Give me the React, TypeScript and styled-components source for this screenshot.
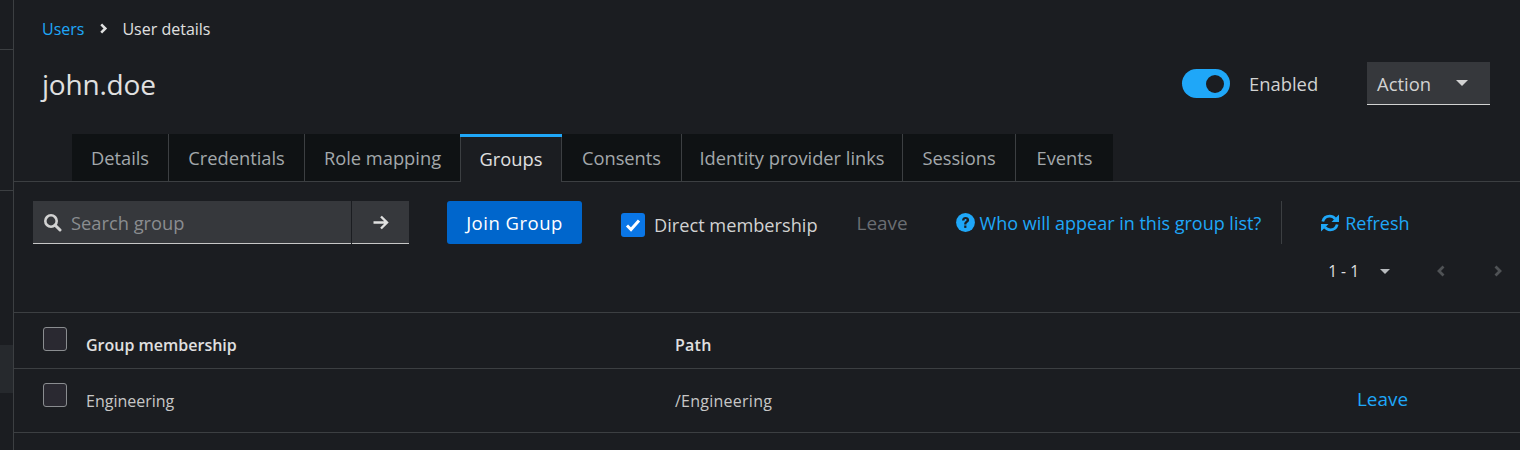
import { createGlobalStyle } from "styled-components";
import styled from "styled-components";

const Global = createGlobalStyle`
  html, body { margin: 0; padding: 0; background: #1b1d21; }
  body { font-family: "Open Sans", "Liberation Sans", sans-serif; color: #e0e0e0; }
`;

const blue = "#1fa7f8";

const Page = styled.div`
  width: 1520px;
  height: 450px;
  display: flex;
  overflow: hidden;
  background: #1b1d21;
`;

const Rail = styled.div`
  width: 13px;
  flex: none;
  border-right: 1px solid #3c3f42;
  display: flex;
  flex-direction: column;
`;
const RailItem = styled.div<{ $h: number; $active?: boolean; $line?: boolean }>`
  height: ${(p) => p.$h}px;
  box-sizing: border-box;
  background: ${(p) => (p.$active ? "#26292d" : "transparent")};
  border-bottom: ${(p) => (p.$line ? "1px solid #3c3f42" : "none")};
`;

const Main = styled.div`
  flex: 1;
  min-width: 0;
  display: flex;
  flex-direction: column;
`;

const Head = styled.div`
  padding: 18px 30px 0 28px;
  height: 134px;
  box-sizing: border-box;
`;
const Crumbs = styled.div`
  display: flex;
  align-items: center;
  height: 21px;
  font-size: 16px;
`;
const CrumbLink = styled.span`
  color: ${blue};
`;
const CrumbSep = styled.span`
  display: flex;
  margin: 0 13px 0 14px;
`;
const CrumbNow = styled.span`
  color: #e0e0e0;
`;
const TitleRow = styled.div`
  display: flex;
  align-items: center;
  margin-top: 23px;
  height: 43px;
`;
const Title = styled.h1`
  margin: 0;
  font-size: 28px;
  font-weight: 400;
  color: #e0e0e0;
  flex: 1;
  letter-spacing: -0.2px;
`;
const Toggle = styled.div`
  width: 48px;
  height: 29px;
  border-radius: 15px;
  background: ${blue};
  display: flex;
  align-items: center;
  justify-content: flex-end;
  padding-right: 6px;
  box-sizing: border-box;
`;
const Knob = styled.div`
  width: 18px;
  height: 18px;
  border-radius: 50%;
  background: #1b1d21;
`;
const ToggleLabel = styled.span`
  width: 70px;
  font-size: 18.4px;
  margin-left: 19px;
  margin-right: 48px;
  color: #d2d2d2;
  white-space: nowrap;
`;
const ActionBtn = styled.div`
  width: 123px;
  height: 43px;
  box-sizing: border-box;
  background: #36383c;
  border-bottom: 1px solid #d2d2d2;
  display: flex;
  align-items: center;
  justify-content: space-between;
  padding: 0 22px 0 10px;
  font-size: 18.4px;
  color: #d2d2d2;
`;
const Caret = styled.span<{ $w?: number; $c?: string }>`
  display: block;
  width: 0;
  height: 0;
  border-left: ${(p) => p.$w ?? 6}px solid transparent;
  border-right: ${(p) => p.$w ?? 6}px solid transparent;
  border-top: ${(p) => p.$w ?? 6}px solid ${(p) => p.$c ?? "#d2d2d2"};
`;

const TabBar = styled.div`
  display: flex;
  height: 48px;
  box-sizing: border-box;
  padding-left: 58px;
  border-bottom: 1px solid #3c3f42;
`;
const Tab = styled.div<{ $w: number; $active?: boolean }>`
  position: relative;
  width: ${(p) => p.$w}px;
  box-sizing: border-box;
  height: ${(p) => (p.$active ? "48px" : "47px")};
  display: flex;
  align-items: center;
  justify-content: center;
  font-size: 18.3px;
  background: ${(p) => (p.$active ? "#1b1d21" : "#0f1214")};
  color: ${(p) => (p.$active ? "#e0e0e0" : "#a3a8ab")};
  border-right: 1px solid #3c3f42;
  &:last-child { border-right: none; }
  ${(p) =>
    p.$active
      ? `&::before { content: ""; position: absolute; top: 0; left: -1px; right: -1px; height: 3px; background: ${blue}; }`
      : ""}
`;

const Toolbar = styled.div`
  display: flex;
  align-items: flex-start;
  padding: 19px 0 0 19px;
  height: 69px;
  box-sizing: border-box;
`;
const SearchBox = styled.div`
  width: 318px;
  height: 43px;
  box-sizing: border-box;
  background: #36383c;
  border-bottom: 1px solid #c7c7c7;
  display: flex;
  align-items: center;
  padding-left: 10px;
  gap: 9px;
`;
const SearchText = styled.span`
  font-size: 18.3px;
  color: #8a8d90;
`;
const SearchBtn = styled.div`
  width: 57px;
  height: 43px;
  margin-left: 1px;
  box-sizing: border-box;
  background: #36383c;
  border-bottom: 1px solid #c7c7c7;
  display: flex;
  align-items: center;
  justify-content: center;
`;
const JoinBtn = styled.div`
  width: 135px;
  height: 43px;
  margin-left: 38px;
  border-radius: 3px;
  background: #0066cc;
  color: #fff;
  font-size: 18.5px;
  letter-spacing: 0.5px;
  display: flex;
  align-items: center;
  justify-content: center;
`;
const CheckWrap = styled.div`
  display: flex;
  align-items: center;
  height: 48px;
  margin-left: 39px;
  gap: 9px;
  font-size: 18.2px;
  color: #d2d2d2;
`;
const BlueCheck = styled.div`
  width: 24px;
  height: 24px;
  border-radius: 3px;
  background: #0a76e6;
  display: flex;
  align-items: center;
  justify-content: center;
`;
const ToolText = styled.div<{ $ml: number; $muted?: boolean; $wide?: boolean }>`
  height: 43px;
  margin-left: ${(p) => p.$ml}px;
  display: flex;
  align-items: center;
  gap: 5px;
  font-size: ${(p) => (p.$wide ? "18.9px" : "18px")};
  color: ${(p) => (p.$muted ? "#6a6e73" : blue)};
`;
const Divider = styled.div`
  width: 1px;
  height: 43px;
  margin-left: 20px;
  background: #3c3f42;
`;

const Pager = styled.div`
  display: flex;
  align-items: center;
  height: 40px;
  padding-right: 16px;
  justify-content: flex-end;
  font-size: 15.5px;
  color: #e0e0e0;
`;
const PageCount = styled.span`
  margin-right: 21px;
`;
const PagerGap = styled.span`
  display: flex;
  margin-left: 45px;
`;

const Table = styled.div`
  margin-top: 21px;
  border-top: 1px solid #3c3f42;
`;
const Row = styled.div<{ $h: number }>`
  display: flex;
  height: ${(p) => p.$h}px;
  box-sizing: border-box;
  border-bottom: 1px solid #3c3f42;
  padding-left: 29px;
  padding-top: 14px;
`;
const Box = styled.div`
  width: 24px;
  height: 24px;
  box-sizing: border-box;
  flex: none;
  border-radius: 3px;
  border: 1px solid #8a8d90;
  background: #2a2931;
`;
const NameCell = styled.div<{ $bold?: boolean }>`
  width: 589px;
  margin-left: 19px;
  padding-top: 7px;
  font-size: 16px;
  font-weight: ${(p) => (p.$bold ? 600 : 400)};
  color: ${(p) => (p.$bold ? "#e0e0e0" : "#c7c7c7")};
`;
const PathCell = styled(NameCell)`
  width: 682px;
  margin-left: 0;
  letter-spacing: 0.25px;
`;
const RowLeave = styled.div`
  font-size: 18.9px;
  color: ${blue};
  padding-top: 3px;
`;

const Chevron = ({ dir, color, size = 12 }: { dir: "left" | "right"; color: string; size?: number }) => (
  <svg width={size} height={size} viewBox="0 0 12 12" fill="none">
    <path
      d={dir === "right" ? "M3.5 1.5 8 6 3.5 10.5" : "M8.5 1.5 4 6 8.5 10.5"}
      stroke={color}
      strokeWidth="2.8"
    />
  </svg>
);

const tabs = [
  { label: "Details", w: 97 },
  { label: "Credentials", w: 136 },
  { label: "Role mapping", w: 156 },
  { label: "Groups", w: 101, active: true },
  { label: "Consents", w: 120 },
  { label: "Identity provider links", w: 221 },
  { label: "Sessions", w: 113 },
  { label: "Events", w: 97 },
];

export default function App() {
  return (
    <>
      <Global />
      <Page>
        <Rail>
          <RailItem $h={50} $line />
          <RailItem $h={141} $line />
          <RailItem $h={154} />
          <RailItem $h={48} $active />
        </Rail>
        <Main>
          <Head>
            <Crumbs>
              <CrumbLink>Users</CrumbLink>
              <CrumbSep>
                <Chevron dir="right" color="#e0e0e0" size={11} />
              </CrumbSep>
              <CrumbNow>User details</CrumbNow>
            </Crumbs>
            <TitleRow>
              <Title>john.doe</Title>
              <Toggle>
                <Knob />
              </Toggle>
              <ToggleLabel>Enabled</ToggleLabel>
              <ActionBtn>
                Action
                <Caret />
              </ActionBtn>
            </TitleRow>
          </Head>
          <TabBar>
            {tabs.map((t) => (
              <Tab key={t.label} $w={t.w} $active={t.active}>
                {t.label}
              </Tab>
            ))}
          </TabBar>
          <Toolbar>
            <SearchBox>
              <svg width="19" height="19" viewBox="0 0 19 19" fill="none">
                <circle cx="8" cy="8" r="5.7" stroke="#d2d2d2" strokeWidth="2.6" />
                <path d="M12.2 12.2 17 17" stroke="#d2d2d2" strokeWidth="3" strokeLinecap="round" />
              </svg>
              <SearchText>Search group</SearchText>
            </SearchBox>
            <SearchBtn>
              <svg width="17" height="17" viewBox="0 0 17 17" fill="none">
                <path d="M1.5 8.5H14M9 2.5l6 6-6 6" stroke="#e0e0e0" strokeWidth="2.4" />
              </svg>
            </SearchBtn>
            <JoinBtn>Join Group</JoinBtn>
            <CheckWrap>
              <BlueCheck>
                <svg width="16" height="14" viewBox="0 0 16 14" fill="none">
                  <path d="M2 7.5l4 4 8-9" stroke="#fff" strokeWidth="3" />
                </svg>
              </BlueCheck>
              Direct membership
            </CheckWrap>
            <ToolText $ml={39} $muted $wide>
              Leave
            </ToolText>
            <ToolText $ml={48}>
              <svg width="19" height="19" viewBox="0 0 19 19">
                <circle cx="9.5" cy="9.5" r="9.4" fill={blue} />
                <path d="M6 7.4c.1-2.3 1.7-3.4 3.6-3.4 2 0 3.5 1.2 3.5 3 0 2.5-2.7 2.5-2.7 4.4H8.2c0-3 2.4-3.1 2.4-4.3 0-.6-.4-1-1-1-.7 0-1.1.5-1.2 1.3z" fill="#1b1d21" />
                <rect x="8.2" y="12.5" width="2.2" height="2.4" fill="#1b1d21" />
              </svg>
              Who will appear in this group list?
            </ToolText>
            <Divider />
            <ToolText $ml={38}>
              <svg width="20" height="20" viewBox="0 0 20 20" fill="none">
                <path d="M2.8 8.5C3.8 4.8 6.6 3.2 9.8 3.2c2.3 0 4.1 1 5.4 2.6" stroke={blue} strokeWidth="2.8" />
                <path d="M17.2 11.5c-1 3.7-3.8 5.3-7 5.3-2.3 0-4.1-1-5.4-2.6" stroke={blue} strokeWidth="2.8" />
                <path d="M19 1.5v7.5h-7.5zM1 18.5V11h7.5z" fill={blue} />
              </svg>
              Refresh
            </ToolText>
          </Toolbar>
          <Pager>
            <PageCount>1 - 1</PageCount>
            <Caret $w={5.5} $c="#b8bbbe" />
            <PagerGap>
              <Chevron dir="left" color="#4f5255" />
            </PagerGap>
            <PagerGap>
              <Chevron dir="right" color="#4f5255" />
            </PagerGap>
          </Pager>
          <Table>
            <Row $h={56}>
              <Box />
              <NameCell $bold>Group membership</NameCell>
              <PathCell $bold>Path</PathCell>
            </Row>
            <Row $h={64}>
              <Box />
              <NameCell>Engineering</NameCell>
              <PathCell>/Engineering</PathCell>
              <RowLeave>Leave</RowLeave>
            </Row>
          </Table>
        </Main>
      </Page>
    </>
  );
}
